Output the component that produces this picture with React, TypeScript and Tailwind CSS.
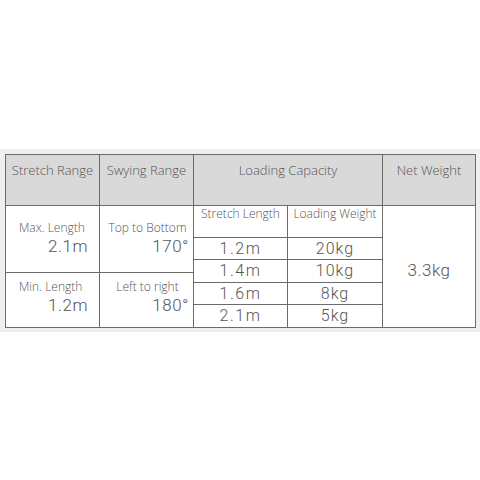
import React from 'react';

const label = "font-['Open_Sans',sans-serif] font-light text-[#555]";
const num = "font-['Roboto','Liberation_Sans',Arial,sans-serif] font-light text-[#555]";

export default function App() {
  const rows = [
    { len: '1.2m', weight: '20kg' },
    { len: '1.4m', weight: '10kg' },
    { len: '1.6m', weight: '8kg' },
    { len: '2.1m', weight: '5kg' },
  ];
  // loading value rows start at grid row 3; rows 4-5 are merged for the 1.4m line
  const rowClass = ['row-start-3 row-span-1', 'row-start-4 row-span-2', 'row-start-6 row-span-1', 'row-start-7 row-span-1'];

  return (
    <div className="w-[480px] h-[480px] bg-white pt-[149px]">
      <div className="bg-[#efefef] h-[183px] pt-[5px] pl-[5px]">
        <div className="grid w-[471px] grid-cols-[93px_93px_93px_94px_92px] grid-rows-[50px_31px_21px_12px_9px_21px_22px] gap-px bg-[#6b6b6b] p-px">
          <div className={`bg-[#d9d9d9] pt-[6px] text-center text-[13px] ${label}`}>Stretch Range</div>
          <div className={`bg-[#d9d9d9] pt-[6px] text-center text-[13px] ${label}`}>Swying Range</div>
          <div className={`col-span-2 bg-[#d9d9d9] pt-[6px] text-center text-[13px] ${label}`}>Loading Capacity</div>
          <div className={`bg-[#d9d9d9] pt-[6px] text-center text-[13px] ${label}`}>Net Weight</div>

          <div className="col-start-1 row-start-2 row-span-3 bg-white flex flex-col pt-[14px] pl-[13px] pr-[11px]">
            <span className={`text-[12px] leading-[16px] ${label}`}>Max. Length</span>
            <span className={`self-end text-[17px] leading-[20px] tracking-[0.5px] ${num}`}>2.1m</span>
          </div>
          <div className="col-start-2 row-start-2 row-span-3 bg-white flex flex-col pt-[14px] pl-[6px] pr-[4px]">
            <span className={`text-center text-[12px] leading-[16px] ${label}`}>Top to Bottom</span>
            <span className={`self-end text-[17px] leading-[20px] tracking-[0.5px] ${num}`}>170°</span>
          </div>
          <div className="col-start-1 row-start-5 row-span-3 bg-white flex flex-col pt-[6px] pl-[13px] pr-[11px]">
            <span className={`text-[12px] leading-[16px] ${label}`}>Min. Length</span>
            <span className={`self-end text-[17px] leading-[20px] tracking-[0.5px] ${num}`}>1.2m</span>
          </div>
          <div className="col-start-2 row-start-5 row-span-3 bg-white flex flex-col pt-[6px] pl-[6px] pr-[4px]">
            <span className={`text-center text-[12px] leading-[16px] ${label}`}>Left to right</span>
            <span className={`self-end text-[17px] leading-[20px] tracking-[0.5px] ${num}`}>180°</span>
          </div>

          <div className={`col-start-3 row-start-2 bg-white text-center text-[12px] leading-[16px] ${label}`}>Stretch Length</div>
          <div className={`col-start-4 row-start-2 bg-white text-center text-[12px] leading-[16px] ${label}`}>Loading Weight</div>

          {rows.map((r, i) => (
            <React.Fragment key={r.len}>
              <div className={`col-start-3 ${rowClass[i]} bg-white flex items-center justify-center text-[16px] tracking-[1.5px] ${num}`}>{r.len}</div>
              <div className={`col-start-4 ${rowClass[i]} bg-white flex items-center justify-center text-[16px] tracking-[1px] ${num}`}>{r.weight}</div>
            </React.Fragment>
          ))}

          <div className={`col-start-5 row-start-2 row-span-6 bg-white flex items-center justify-center pt-[8px] text-[17px] tracking-[0.5px] ${num}`}>3.3kg</div>
        </div>
      </div>
    </div>
  );
}
